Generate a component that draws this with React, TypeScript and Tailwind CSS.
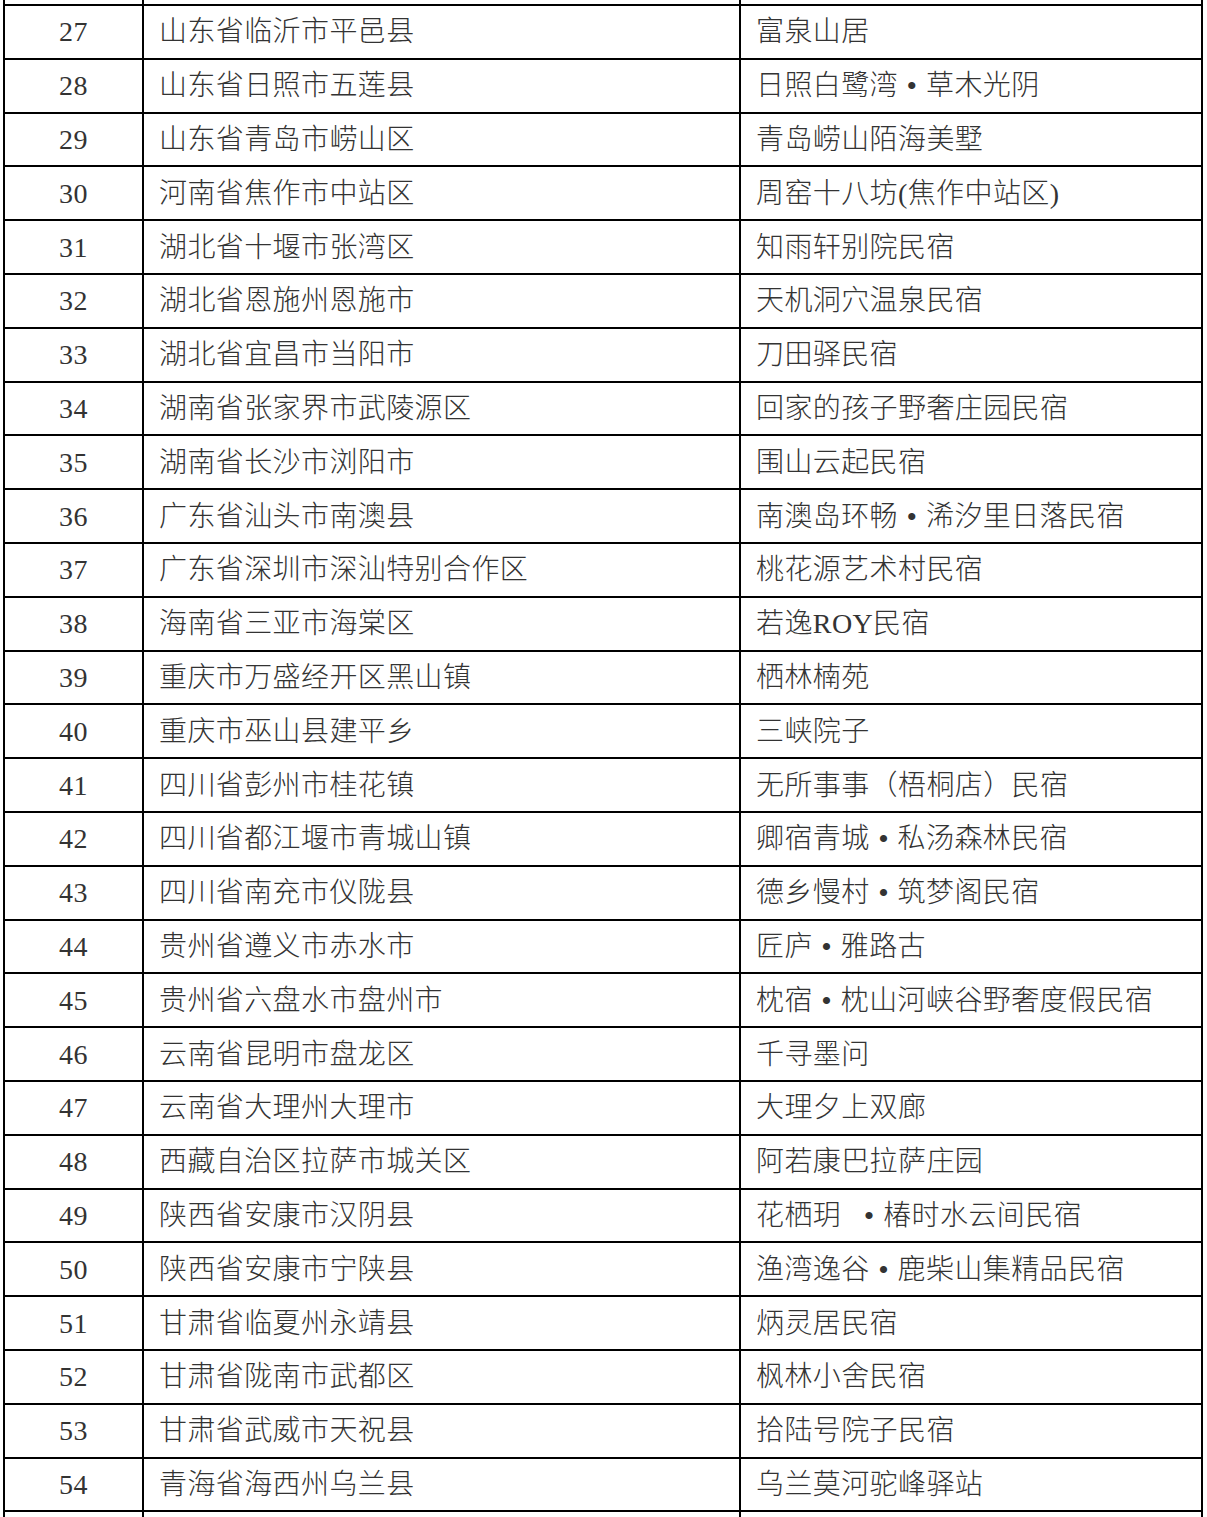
import React from "react";

const rows: [string, string, string][] = [
  ["27", "山东省临沂市平邑县", "富泉山居"],
  ["28", "山东省日照市五莲县", "日照白鹭湾•草木光阴"],
  ["29", "山东省青岛市崂山区", "青岛崂山陌海美墅"],
  ["30", "河南省焦作市中站区", "周窑十八坊(焦作中站区)"],
  ["31", "湖北省十堰市张湾区", "知雨轩别院民宿"],
  ["32", "湖北省恩施州恩施市", "天机洞穴温泉民宿"],
  ["33", "湖北省宜昌市当阳市", "刀田驿民宿"],
  ["34", "湖南省张家界市武陵源区", "回家的孩子野奢庄园民宿"],
  ["35", "湖南省长沙市浏阳市", "围山云起民宿"],
  ["36", "广东省汕头市南澳县", "南澳岛环畅•浠汐里日落民宿"],
  ["37", "广东省深圳市深汕特别合作区", "桃花源艺术村民宿"],
  ["38", "海南省三亚市海棠区", "若逸ROY民宿"],
  ["39", "重庆市万盛经开区黑山镇", "栖林楠苑"],
  ["40", "重庆市巫山县建平乡", "三峡院子"],
  ["41", "四川省彭州市桂花镇", "无所事事（梧桐店）民宿"],
  ["42", "四川省都江堰市青城山镇", "卿宿青城•私汤森林民宿"],
  ["43", "四川省南充市仪陇县", "德乡慢村•筑梦阁民宿"],
  ["44", "贵州省遵义市赤水市", "匠庐•雅路古"],
  ["45", "贵州省六盘水市盘州市", "枕宿•枕山河峡谷野奢度假民宿"],
  ["46", "云南省昆明市盘龙区", "千寻墨问"],
  ["47", "云南省大理州大理市", "大理夕上双廊"],
  ["48", "西藏自治区拉萨市城关区", "阿若康巴拉萨庄园"],
  ["49", "陕西省安康市汉阴县", "花栖玥 •椿时水云间民宿"],
  ["50", "陕西省安康市宁陕县", "渔湾逸谷•鹿柴山集精品民宿"],
  ["51", "甘肃省临夏州永靖县", "炳灵居民宿"],
  ["52", "甘肃省陇南市武都区", "枫林小舍民宿"],
  ["53", "甘肃省武威市天祝县", "拾陆号院子民宿"],
  ["54", "青海省海西州乌兰县", "乌兰莫河驼峰驿站"],
];

function Name({ text }: { text: string }) {
  const parts = text.split(/( ?•)/);
  return (
    <>
      {parts.map((p, i) =>
        p === "•" || p === " •" ? (
          <React.Fragment key={i}>
            {p === " •" && <span className="inline-block w-[14px]" />}
            <span className="inline-block w-[28px] text-center text-[30px] leading-none">•</span>
          </React.Fragment>
        ) : (
          <span key={i}>{p}</span>
        )
      )}
    </>
  );
}

export default function App() {
  return (
    <div className="min-h-screen bg-white">
      <div
        className="ml-[3px] w-[1200px] border-l-2 border-black text-[28px] font-light tracking-[0.4px] text-[#333]"
        style={{ fontFamily: '"Liberation Serif", "Noto Sans CJK SC", serif' }}
      >
        <div className="flex h-[6px] border-b-2 border-black">
          <div className="w-[139px] border-r-2 border-black" />
          <div className="w-[597px] border-r-2 border-black" />
          <div className="w-[462px] border-r-2 border-black" />
        </div>
        {rows.map(([no, region, name]) => (
          <div key={no} className="flex h-[53.8px] border-b-2 border-black">
            <div className="flex w-[139px] items-center justify-center border-r-2 border-black pt-[1px]">{no}</div>
            <div className="flex w-[597px] items-center whitespace-nowrap border-r-2 border-black pl-[15px] pt-[1px]">{region}</div>
            <div className="flex w-[462px] items-center whitespace-nowrap border-r-2 border-black pl-[15px] pt-[1px]">
              <Name text={name} />
            </div>
          </div>
        ))}
        <div className="flex h-[20px]">
          <div className="w-[139px] border-r-2 border-black" />
          <div className="w-[597px] border-r-2 border-black" />
          <div className="w-[462px] border-r-2 border-black" />
        </div>
      </div>
    </div>
  );
}
